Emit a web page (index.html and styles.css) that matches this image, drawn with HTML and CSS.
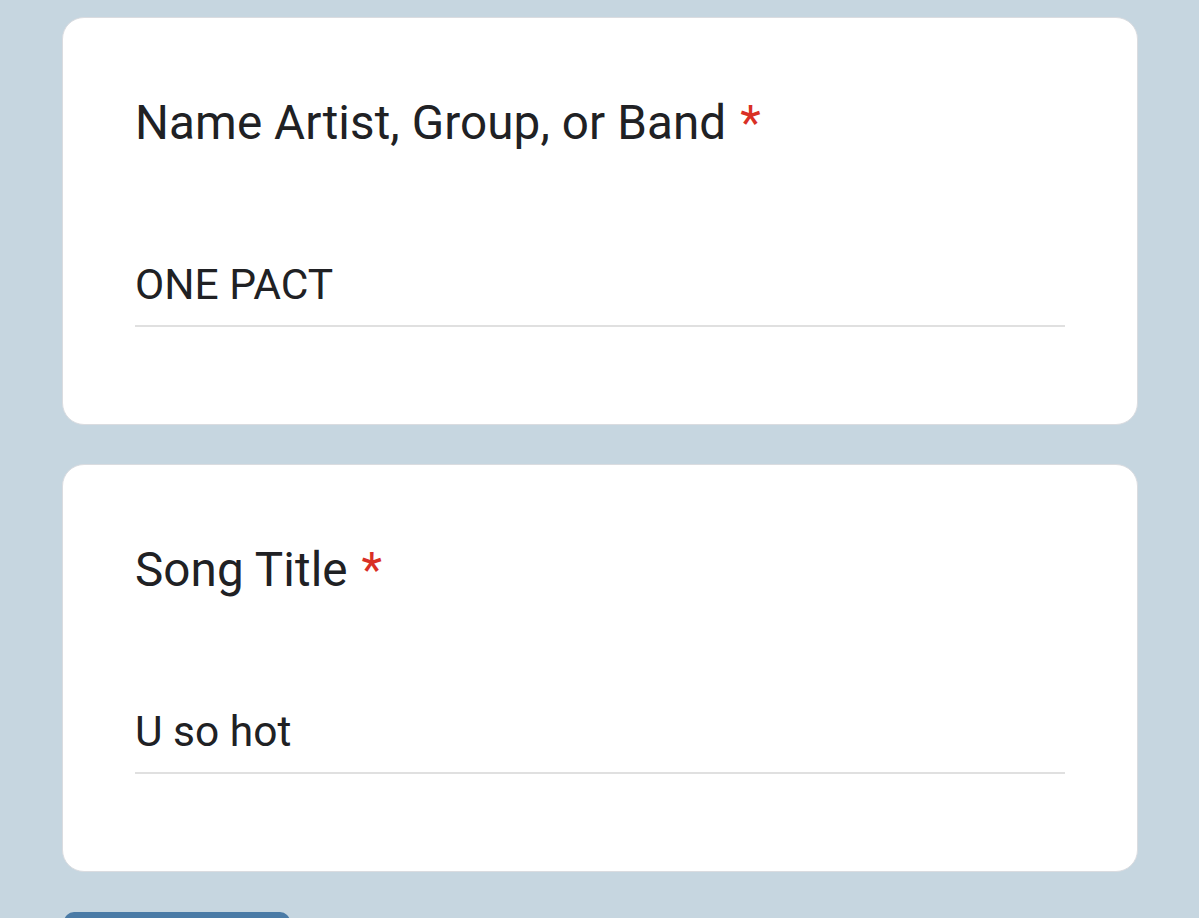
FILE: index.html
```html
<!DOCTYPE html>
<html>
<head>
<meta charset="utf-8">
<link rel="stylesheet" href="styles.css">
</head>
<body>
<main class="form">
  <section class="card">
    <h2 class="q-title">Name Artist, Group, or Band <span class="req">*</span></h2>
    <div class="answer">ONE PACT</div>
  </section>
  <section class="card">
    <h2 class="q-title">Song Title <span class="req">*</span></h2>
    <div class="answer">U so hot</div>
  </section>
  <div class="actions"><button class="submit" type="button"></button></div>
</main>
</body>
</html>
```
FILE: styles.css
```css
html, body {
  margin: 0;
  padding: 0;
  background: #c6d6e0;
  font-family: Roboto, "Noto Sans", sans-serif;
  color: #202124;
}
.form {
  padding: 17px 61px 0 62px;
  display: flex;
  flex-direction: column;
  gap: 39px;
  overflow: hidden;
  height: 918px;
  box-sizing: border-box;
}
.card {
  flex-shrink: 0;
  background: #fff;
  border: 1.5px solid #dadce0;
  border-radius: 22px;
  height: 408px;
  box-sizing: border-box;
  padding: 0 72px;
  display: flex;
  flex-direction: column;
}
.q-title {
  margin: 75px 0 0;
  font-size: 47.6px;
  font-weight: 400;
  line-height: 60px;
  letter-spacing: 0.1px;
}
.req {
  color: #d93025;
  margin-left: 2px;
}
.answer {
  margin-top: 105px;
  font-size: 42.5px;
  line-height: 54px;
  padding-bottom: 13px;
  border-bottom: 2px solid #e0e0e0;
}
.actions {
  flex-shrink: 0;
  display: flex;
  margin-top: 1px;
}
.submit {
  width: 226px;
  height: 48px;
  margin-left: 2px;
  background: #4a7ba6;
  border: none;
  border-radius: 10px;
}
```
